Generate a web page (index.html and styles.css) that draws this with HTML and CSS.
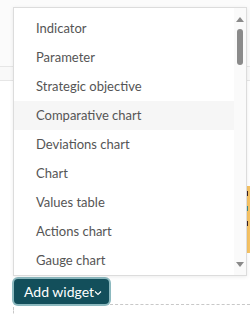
FILE: index.html
```html
<!DOCTYPE html>
<html lang="en">
<head>
    <meta charset="UTF-8">
    <meta name="viewport" content="width=device-width, initial-scale=1.0">
    <title>Dashboard</title>
    <link rel="stylesheet" href="styles.css">
</head>
<body>
    <div class="board">
        <div class="topbar">
            <div class="topbar-marks"><span></span><span></span></div>
        </div>
        <div class="tabs-row"></div>
        <div class="cards">
            <div class="card-edge short"></div>
            <div class="card-edge long"></div>
            <div class="side-card">
                <span class="mark dark"></span>
                <span class="mark teal"></span>
                <span class="mark dark"></span>
            </div>
        </div>
        <div class="toolbar-bottom">
            <div class="widget-menu">
                <button class="add-widget">Add widget<svg class="chev" width="8" height="6" viewBox="0 0 8 6"><path d="M1 1.5 L4 4.5 L7 1.5" fill="none" stroke="#fff" stroke-width="1.1"/></svg></button>
                <div class="dropdown">
                    <ul class="options">
                        <li>Indicator</li>
                        <li>Parameter</li>
                        <li>Strategic objective</li>
                        <li class="hover">Comparative chart</li>
                        <li>Deviations chart</li>
                        <li>Chart</li>
                        <li>Values table</li>
                        <li>Actions chart</li>
                        <li>Gauge chart</li>
                    </ul>
                    <div class="scrollbar">
                        <span class="arrow up"></span>
                        <span class="thumb"></span>
                        <span class="arrow down"></span>
                    </div>
                </div>
            </div>
            <div class="dashed"></div>
        </div>
        <div class="drop-zone"></div>
    </div>
</body>
</html>
```

FILE: styles.css
```css
body, html {
    margin: 0;
    padding: 0;
    background-color: #ffffff;
    font-family: Lato, "Open Sans", Arial, sans-serif;
    overflow: hidden;
}
.board {
    position: relative;
    width: 250px;
    height: 314px;
}
/* fond derrière le menu */
.topbar {
    height: 66px;
    background-color: #fbfbfb;
}
.topbar-marks {
    display: flex;
    flex-direction: column;
    gap: 12px;
    padding: 12px 0 0 13px;
}
.topbar-marks span {
    width: 1px;
    height: 8px;
    background-color: #666;
}
.tabs-row {
    height: 13px;
    border-top: 1px solid #e6e6e6;
    border-bottom: 1px solid #e6e6e6;
    background-color: #f9f9f9;
}
.cards {
    position: relative;
    height: 172px;
}
.card-edge {
    position: absolute;
    left: 13px;
    width: 1px;
    background-color: #f0a848;
}
.card-edge.short { top: 22px; height: 10px; }
.card-edge.long { top: 91px; height: 81px; }
.side-card {
    position: absolute;
    right: 0;
    top: 105px;
    width: 4px;
    height: 67px;
    background-color: #f7c465;
    display: flex;
    flex-direction: column;
    gap: 10px;
    padding-top: 5px;
    box-sizing: border-box;
}
.mark { width: 2px; height: 5px; }
.mark.dark { background-color: #3a1f1f; }
.mark.teal { background-color: #3c8c8c; }

.toolbar-bottom {
    position: relative;
    padding: 0 0 0 14px;
    margin-top: 26px;
}
.dashed {
    position: absolute;
    left: 110px;
    right: 0;
    top: 25px;
    border-top: 1px dashed #c8c8c8;
}
.drop-zone {
    margin: 3px 0 0 13px;
    height: 10px;
    border-left: 1px dashed #c8c8c8;
}

/* bouton */
.widget-menu {
    position: relative;
    display: inline-block;
}
.add-widget {
    display: flex;
    align-items: center;
    height: 25px;
    width: 95px;
    padding: 0 0 0 10px;
    border: none;
    border-radius: 4px;
    background-color: #134f5b;
    color: #ffffff;
    font-family: Lato, "Open Sans", Arial, sans-serif;
    font-size: 14px;
    box-shadow: 0 0 0 2px #8cb9bf; /* anneau de focus */
    cursor: pointer;
}
.chev {
    margin-left: 0;
    margin-top: 2px;
}

/* menu déroulant */
.dropdown {
    position: absolute;
    left: -1px;
    bottom: 28px;
    width: 232px;
    height: 267px;
    display: flex;
    background-color: #ffffff;
    border: 1px solid #dcdcdc;
    box-shadow: 0 1px 4px rgba(0,0,0,0.08);
    z-index: 10;
}
.options {
    list-style: none;
    margin: 0;
    padding: 6px 0 0 0;
    flex: 1;
}
.options li {
    height: 29px;
    line-height: 29px;
    padding-left: 22px;
    font-size: 13px;
    color: #555555;
    white-space: nowrap;
}
.options li.hover {
    background-color: #f6f6f6;
}
.scrollbar {
    width: 12px;
    background-color: #fafafa;
    display: flex;
    flex-direction: column;
    align-items: center;
    padding: 9px 0 8px 0;
}
.thumb {
    width: 6px;
    height: 36px;
    margin-top: 7px;
    border-radius: 3px;
    background-color: #8a8a8a;
}
.arrow {
    width: 0;
    height: 0;
    border-left: 4px solid transparent;
    border-right: 4px solid transparent;
}
.arrow.up { border-bottom: 5px solid #8a8a8a; }
.arrow.down { border-top: 5px solid #8a8a8a; margin-top: auto; }
```
